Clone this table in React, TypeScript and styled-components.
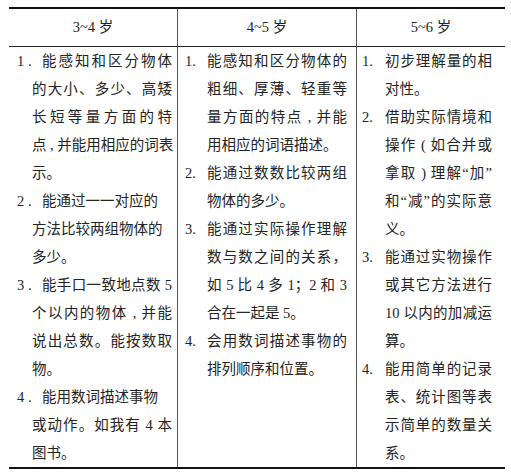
import React from "react";
import styled, { createGlobalStyle } from "styled-components";

const GlobalStyle = createGlobalStyle`
  html, body { margin: 0; padding: 0; background: #fff; }
  body {
    font-family: "Liberation Serif", "Noto Sans CJK SC", serif;
    color: #232323;
  }
`;

const Table = styled.div`
  margin: 7px 0 0 9px;
  width: 496px;
  display: grid;
  grid-template-columns: 169px 179px 148px;
  border-top: 2px solid #111;
  border-bottom: 2px solid #111;
  font-size: 14.5px;
`;

const HeadCell = styled.div<{ $last?: boolean }>`
  height: 37px;
  display: flex;
  align-items: center;
  justify-content: center;
  border-bottom: 1px solid #222;
  border-right: ${(p) => (p.$last ? "none" : "1px solid #555")};
  line-height: 1;
`;

const BodyCell = styled.div<{ $pl: number; $pr: number; $last?: boolean }>`
  padding: 0 ${(p) => p.$pr}px 0 ${(p) => p.$pl}px;
  border-right: ${(p) => (p.$last ? "none" : "1px solid #555")};
  line-height: 28px;
`;

const HangItem = styled.div<{ $indent: number }>`
  padding-left: ${(p) => p.$indent}px;
`;

const RowItem = styled.div`
  display: flex;
`;

const Lines = styled.div`
  flex: 1;
  min-width: 0;
`;

const Marker = styled.span<{ $w: number; $shift?: number }>`
  flex: none;
  width: ${(p) => p.$w}px;
  margin-left: ${(p) => -(p.$shift || 0)}px;
  white-space: pre;
`;

const FirstLine = styled.div`
  display: flex;
`;

const Line = styled.div<{ $full?: boolean }>`
  flex: 1;
  white-space: nowrap;
  text-align: ${(p) => (p.$full ? "justify" : "left")};
  text-align-last: ${(p) => (p.$full ? "justify" : "left")};
`;

type L = [string, number];
type Item = { n: number; lines: L[] };

const col1: Item[] = [
  {
    n: 1,
    lines: [
      ["能感知和区分物体", 1],
      ["的大小、多少、高矮", 1],
      ["长短等量方面的特", 1],
      ["点 , 并能用相应的词表", 1],
      ["示。", 0],
    ],
  },
  {
    n: 2,
    lines: [
      ["能通过一一对应的", 0],
      ["方法比较两组物体的", 0],
      ["多少。", 0],
    ],
  },
  {
    n: 3,
    lines: [
      ["能手口一致地点数 5", 1],
      ["个以内的物体 , 并能", 1],
      ["说出总数。能按数取", 1],
      ["物。", 0],
    ],
  },
  {
    n: 4,
    lines: [
      ["能用数词描述事物", 0],
      ["或动作。如我有 4 本", 1],
      ["图书。", 0],
    ],
  },
];

const col2: Item[] = [
  {
    n: 1,
    lines: [
      ["能感知和区分物体的", 1],
      ["粗细、厚薄、轻重等", 1],
      ["量方面的特点 , 并能", 1],
      ["用相应的词语描述。", 0],
    ],
  },
  {
    n: 2,
    lines: [
      ["能通过数数比较两组", 1],
      ["物体的多少。", 0],
    ],
  },
  {
    n: 3,
    lines: [
      ["能通过实际操作理解", 1],
      ["数与数之间的关系，", 1],
      ["如 5 比 4 多 1；2 和 3", 1],
      ["合在一起是 5。", 0],
    ],
  },
  {
    n: 4,
    lines: [
      ["会用数词描述事物的", 1],
      ["排列顺序和位置。", 0],
    ],
  },
];

const col3: Item[] = [
  {
    n: 1,
    lines: [
      ["初步理解量的相", 1],
      ["对性。", 0],
    ],
  },
  {
    n: 2,
    lines: [
      ["借助实际情境和", 1],
      ["操作 ( 如合并或", 1],
      ["拿取 ) 理解“加”", 1],
      ["和“减”的实际意", 1],
      ["义。", 0],
    ],
  },
  {
    n: 3,
    lines: [
      ["能通过实物操作", 1],
      ["或其它方法进行", 1],
      ["10 以内的加减运", 1],
      ["算。", 0],
    ],
  },
  {
    n: 4,
    lines: [
      ["能用简单的记录", 1],
      ["表、统计图等表", 1],
      ["示简单的数量关", 1],
      ["系。", 0],
    ],
  },
];

const HangColumn: React.FC<{ items: Item[] }> = ({ items }) => (
  <>
    {items.map((it) => (
      <HangItem key={it.n} $indent={15}>
        {it.lines.map(([t, f], i) =>
          i === 0 ? (
            <FirstLine key={i}>
              <Marker $w={25} $shift={15}>{`${it.n} .`}</Marker>
              <Line $full={!!f}>{t}</Line>
            </FirstLine>
          ) : (
            <Line key={i} $full={!!f}>
              {t}
            </Line>
          )
        )}
      </HangItem>
    ))}
  </>
);

const ListColumn: React.FC<{ items: Item[]; markerW: number }> = ({ items, markerW }) => (
  <>
    {items.map((it) => (
      <RowItem key={it.n}>
        <Marker $w={markerW}>{`${it.n}.`}</Marker>
        <Lines>
          {it.lines.map(([t, f], i) => (
            <Line key={i} $full={!!f}>
              {t}
            </Line>
          ))}
        </Lines>
      </RowItem>
    ))}
  </>
);

export default function App() {
  return (
    <>
      <GlobalStyle />
      <Table>
        <HeadCell>3~4 岁</HeadCell>
        <HeadCell>4~5 岁</HeadCell>
        <HeadCell $last>5~6 岁</HeadCell>
        <BodyCell $pl={8} $pr={5}>
          <HangColumn items={col1} />
        </BodyCell>
        <BodyCell $pl={7} $pr={9}>
          <ListColumn items={col2} markerW={22} />
        </BodyCell>
        <BodyCell $pl={5} $pr={13} $last>
          <ListColumn items={col3} markerW={23} />
        </BodyCell>
      </Table>
    </>
  );
}
